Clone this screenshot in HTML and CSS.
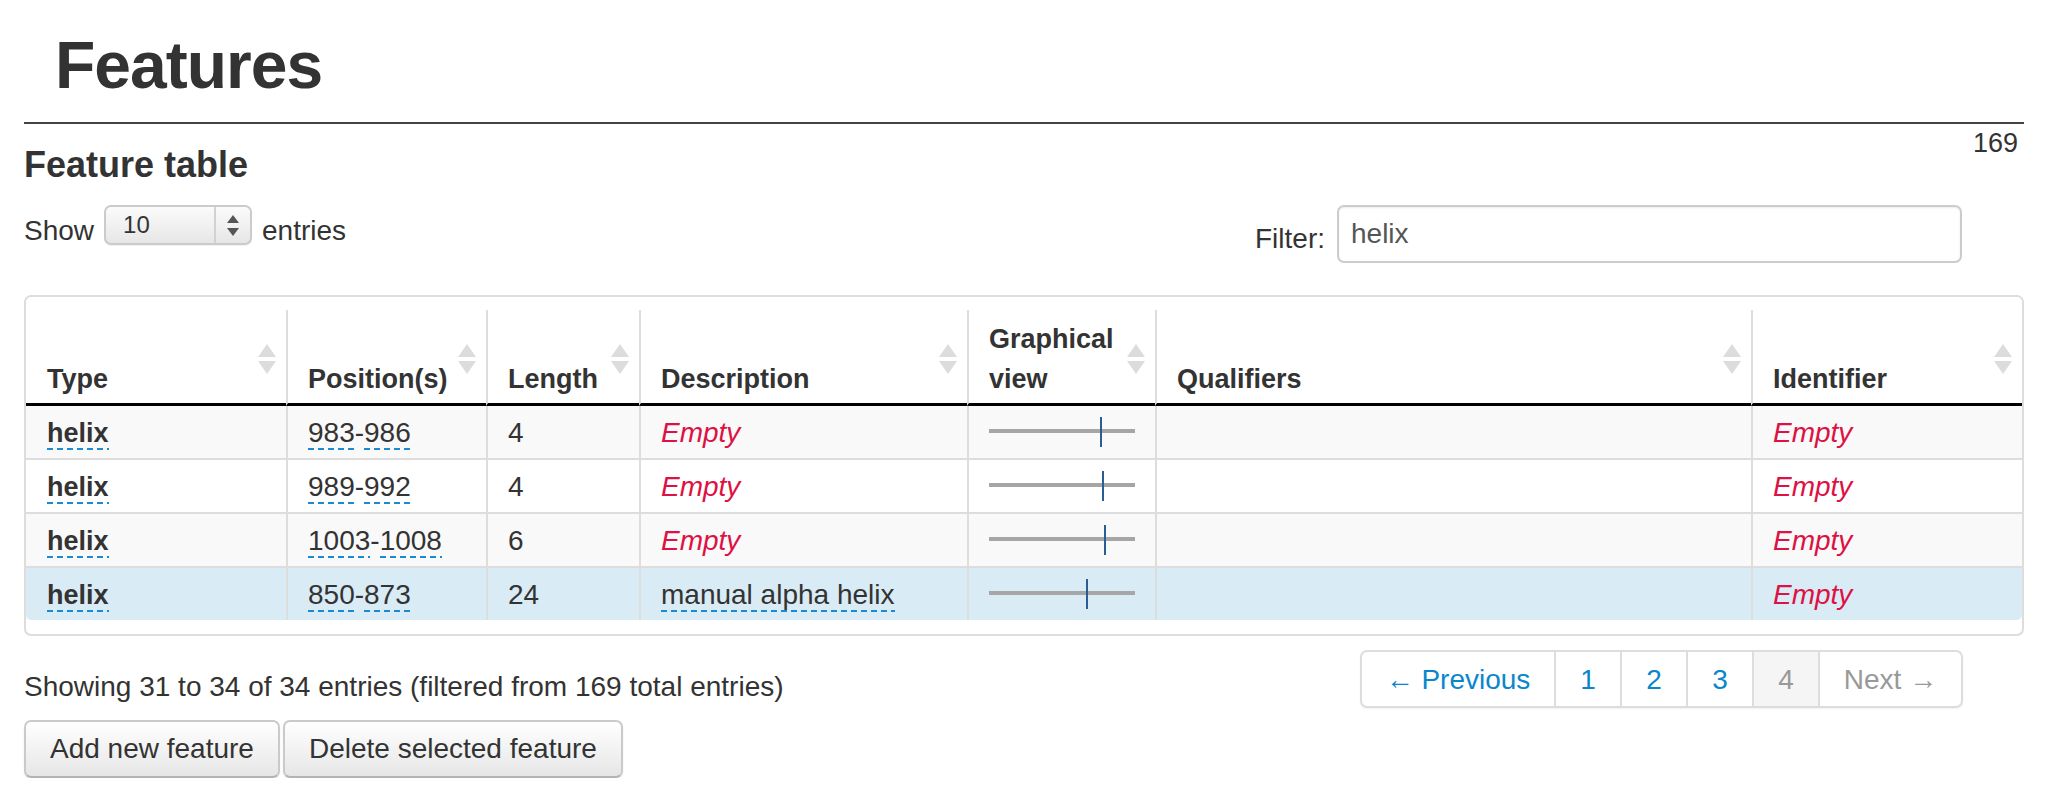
FILE: index.html
```html
<!DOCTYPE html>
<html>
<head>
<meta charset="utf-8">
<title>Features</title>
<link rel="stylesheet" href="styles.css">
</head>
<body>
<div class="page">
  <div class="page-header"><h1>Features</h1></div>
  <div class="count">169</div>
  <h3 class="section-title">Feature table</h3>

  <div class="controls">
    <div class="length">
      <span>Show</span>
      <div class="select">
        <span class="select-value">10</span>
        <span class="select-arrows"><svg width="12" height="21" viewBox="0 0 12 21"><path d="M6 0 L12 8 H0 Z M0 13 H12 L6 21 Z" fill="#555"/></svg></span>
      </div>
      <span>entries</span>
    </div>
    <div class="filter">
      <label for="flt">Filter:</label>
      <input id="flt" class="filter-input" type="text" value="helix">
    </div>
  </div>

  <div class="table-wrap">
    <table class="table">
      <thead>
        <tr>
          <th class="c-type">Type<svg class="sort" width="18" height="30" viewBox="0 0 18 30"><path d="M9 0 L18 13 H0 Z M0 17 H18 L9 30 Z" fill="#dcdcdc"/></svg></th>
          <th class="c-pos">Position(s)<svg class="sort" width="18" height="30" viewBox="0 0 18 30"><path d="M9 0 L18 13 H0 Z M0 17 H18 L9 30 Z" fill="#dcdcdc"/></svg></th>
          <th class="c-len">Length<svg class="sort" width="18" height="30" viewBox="0 0 18 30"><path d="M9 0 L18 13 H0 Z M0 17 H18 L9 30 Z" fill="#dcdcdc"/></svg></th>
          <th class="c-desc">Description<svg class="sort" width="18" height="30" viewBox="0 0 18 30"><path d="M9 0 L18 13 H0 Z M0 17 H18 L9 30 Z" fill="#dcdcdc"/></svg></th>
          <th class="c-gv">Graphical view<svg class="sort" width="18" height="30" viewBox="0 0 18 30"><path d="M9 0 L18 13 H0 Z M0 17 H18 L9 30 Z" fill="#dcdcdc"/></svg></th>
          <th class="c-qual">Qualifiers<svg class="sort" width="18" height="30" viewBox="0 0 18 30"><path d="M9 0 L18 13 H0 Z M0 17 H18 L9 30 Z" fill="#dcdcdc"/></svg></th>
          <th class="c-id">Identifier<svg class="sort" width="18" height="30" viewBox="0 0 18 30"><path d="M9 0 L18 13 H0 Z M0 17 H18 L9 30 Z" fill="#dcdcdc"/></svg></th>
        </tr>
      </thead>
      <tbody>
        <tr>
          <td><span class="u type">helix</span></td>
          <td><span class="u">983</span>-<span class="u">986</span></td>
          <td>4</td>
          <td><span class="empty">Empty</span></td>
          <td><svg class="gv" width="146" height="40" viewBox="0 0 146 40"><rect x="0" y="16" width="146" height="4" fill="#a6a6a6"/><rect x="111" y="4" width="2" height="30" fill="#2b5d92"/></svg></td>
          <td></td>
          <td><span class="empty">Empty</span></td>
        </tr>
        <tr>
          <td><span class="u type">helix</span></td>
          <td><span class="u">989</span>-<span class="u">992</span></td>
          <td>4</td>
          <td><span class="empty">Empty</span></td>
          <td><svg class="gv" width="146" height="40" viewBox="0 0 146 40"><rect x="0" y="16" width="146" height="4" fill="#a6a6a6"/><rect x="113" y="4" width="2" height="30" fill="#2b5d92"/></svg></td>
          <td></td>
          <td><span class="empty">Empty</span></td>
        </tr>
        <tr>
          <td><span class="u type">helix</span></td>
          <td><span class="u">1003</span>-<span class="u">1008</span></td>
          <td>6</td>
          <td><span class="empty">Empty</span></td>
          <td><svg class="gv" width="146" height="40" viewBox="0 0 146 40"><rect x="0" y="16" width="146" height="4" fill="#a6a6a6"/><rect x="115" y="4" width="2" height="30" fill="#2b5d92"/></svg></td>
          <td></td>
          <td><span class="empty">Empty</span></td>
        </tr>
        <tr class="selected">
          <td><span class="u type">helix</span></td>
          <td><span class="u">850</span>-<span class="u">873</span></td>
          <td>24</td>
          <td><span class="u">manual alpha helix</span></td>
          <td><svg class="gv" width="146" height="40" viewBox="0 0 146 40"><rect x="0" y="16" width="146" height="4" fill="#a6a6a6"/><rect x="97" y="4" width="2" height="30" fill="#2b5d92"/></svg></td>
          <td></td>
          <td><span class="empty">Empty</span></td>
        </tr>
      </tbody>
    </table>
  </div>

  <div class="footer">
    <div class="info">Showing 31 to 34 of 34 entries (filtered from 169 total entries)</div>
    <ul class="pagination">
      <li><a class="pg prev">← Previous</a></li>
      <li><a class="pg num">1</a></li>
      <li><a class="pg num">2</a></li>
      <li><a class="pg num">3</a></li>
      <li class="active"><a class="pg num">4</a></li>
      <li class="disabled"><a class="pg next">Next →</a></li>
    </ul>
  </div>

  <div class="actions">
    <button class="btn" type="button">Add new feature</button>
    <button class="btn" type="button">Delete selected feature</button>
  </div>
</div>
</body>
</html>
```

FILE: styles.css
```css
* { box-sizing: border-box; }

html, body {
  margin: 0;
  padding: 0;
  background: #fff;
}

body {
  font-family: "Liberation Sans", Arial, Helvetica, sans-serif;
  font-size: 28px;
  line-height: 40px;
  color: #333;
}

.page {
  width: 2000px;
  margin-left: 24px;
  padding-top: 30px;
}

/* Header */
.page-header {
  border-bottom: 2px solid #444;
  padding-bottom: 22px;
}

.page-header h1 {
  margin: 0;
  padding-left: 31px;
  font-size: 66px;
  line-height: 70px;
  font-weight: bold;
  letter-spacing: -1px;
  color: #333;
}

.count {
  float: right;
  margin: 4px 6px 0 0;
  font-size: 27px;
  line-height: 30px;
}

.section-title {
  margin: 21px 0 0;
  font-size: 36px;
  line-height: 40px;
  font-weight: bold;
}

/* Controls */
.controls {
  display: flex;
  justify-content: space-between;
  align-items: flex-start;
  margin-top: 20px;
  padding-right: 62px;
}

.length {
  display: flex;
  align-items: flex-start;
  gap: 10px;
  line-height: 52px;
}

.select {
  display: flex;
  width: 148px;
  height: 40px;
  border: 2px solid #cbcbcb;
  border-radius: 7px;
  background: linear-gradient(#fbfbfb, #f1f1f1 50%, #e6e6e6);
  box-shadow: 0 1px 1px rgba(0, 0, 0, 0.06);
}

.select-value {
  width: 108px;
  padding-left: 17px;
  font-size: 24px;
  line-height: 36px;
  color: #333;
}

.select-arrows {
  flex: 1;
  display: flex;
  align-items: center;
  justify-content: center;
  border-left: 2px solid #d2d2d2;
}

.select-arrows svg { display: block; }

.filter {
  display: flex;
  align-items: flex-start;
  gap: 12px;
}

.filter label {
  line-height: 68px;
}

.filter-input {
  width: 625px;
  height: 58px;
  margin: 0;
  padding: 0 12px;
  border: 2px solid #cccccc;
  border-radius: 7px;
  font-family: inherit;
  font-size: 28px;
  color: #555;
  background: #fff;
  box-shadow: inset 0 1px 2px rgba(0, 0, 0, 0.08);
  outline: none;
}

/* Table */
.table-wrap {
  margin-top: 22px;
  border: 2px solid #dddddd;
  border-radius: 7px;
  padding: 13px 0 14px;
}

.table {
  width: 100%;
  table-layout: fixed;
  border-collapse: separate;
  border-spacing: 0;
}

.table th,
.table td {
  text-align: left;
  border-left: 2px solid #dddddd;
}

.table th:first-child,
.table td:first-child {
  border-left: 0;
}

.table th {
  position: relative;
  vertical-align: bottom;
  padding: 9px 30px 4px 20px;
  font-size: 27px;
  font-weight: bold;
  border-bottom: 3px solid #000;
}

.table td {
  vertical-align: top;
  padding: 7px 20px 5px 20px;
}

.table th:first-child,
.table td:first-child {
  padding-left: 21px;
}

.c-type { width: 260px; }
.c-pos { width: 200px; }
.c-len { width: 153px; }
.c-desc { width: 328px; }
.c-gv { width: 188px; }
.c-qual { width: 596px; }
.c-id { width: 271px; }

.sort {
  position: absolute;
  right: 10px;
  top: 34px;
}

.table tbody tr + tr td {
  border-top: 2px solid #dddddd;
}

.table tbody tr:nth-child(odd) td {
  background: #f9f9f9;
}

.table tbody tr.selected td {
  background: #d9ebf5;
}

.table tbody tr:last-child td:first-child {
  border-bottom-left-radius: 5px;
}

.table tbody tr:last-child td:last-child {
  border-bottom-right-radius: 5px;
}

.u {
  padding-bottom: 2px;
  background-image: linear-gradient(90deg, #1a8ad2 6px, transparent 6px);
  background-size: 10px 2px;
  background-repeat: repeat-x;
  background-position: 0 100%;
}

.type {
  font-weight: bold;
  font-size: 27px;
}

.empty {
  font-style: italic;
  color: #dd1144;
}

.gv {
  display: block;
}

/* Footer */
.footer {
  display: flex;
  justify-content: space-between;
  align-items: flex-start;
  margin-top: 14px;
  padding-right: 61px;
}

.info {
  padding-top: 17px;
}

.pagination {
  display: flex;
  margin: 0;
  padding: 0;
  list-style: none;
  border: 2px solid #dddddd;
  border-radius: 7px;
  box-shadow: 0 1px 2px rgba(0, 0, 0, 0.06);
  overflow: hidden;
}

.pagination li + li {
  border-left: 2px solid #dddddd;
}

.pg {
  display: block;
  padding: 8px 0 6px;
  line-height: 40px;
  text-align: center;
  color: #0a86cc;
  text-decoration: none;
}

.prev { width: 192px; }
.num { width: 64px; }
.next { width: 141px; }

.pagination .active .pg {
  background: #f5f5f5;
  color: #999;
}

.pagination .disabled .pg {
  color: #999;
}

/* Buttons */
.actions {
  display: flex;
  gap: 3px;
  margin-top: 12px;
}

.btn {
  margin: 0;
  padding: 7px 24px 7px;
  font-family: inherit;
  font-size: 28px;
  line-height: 40px;
  color: #333;
  border: 2px solid #cacaca;
  border-bottom-color: #b3b3b3;
  border-radius: 7px;
  background: linear-gradient(#ffffff, #e6e6e6);
  box-shadow: inset 0 1px 0 rgba(255, 255, 255, 0.2), 0 1px 2px rgba(0, 0, 0, 0.08);
}
```
